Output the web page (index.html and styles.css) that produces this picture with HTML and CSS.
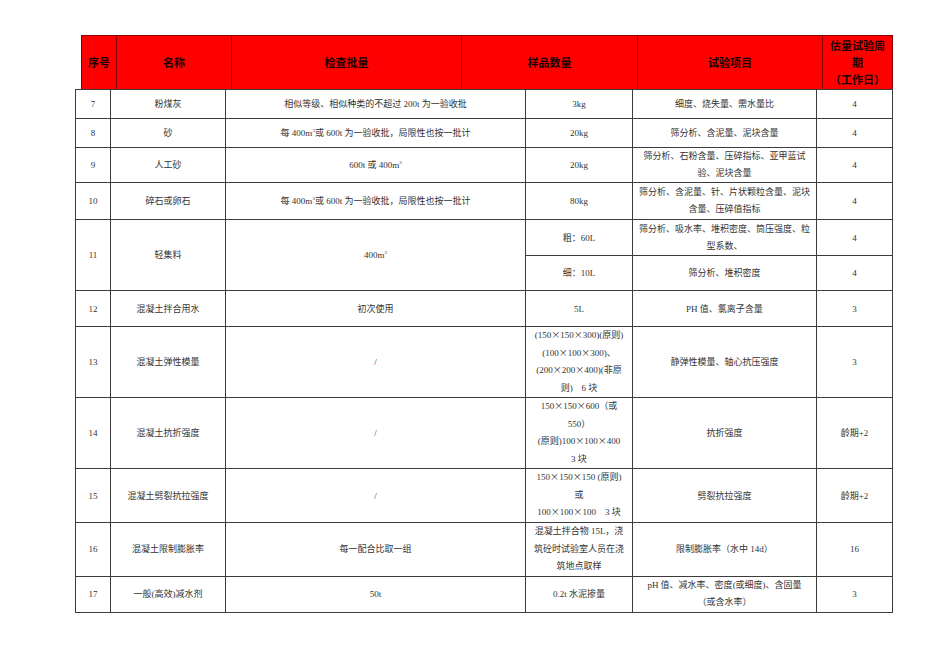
FILE: index.html
```html
<!DOCTYPE html>
<html lang="zh-CN">
<head>
<meta charset="utf-8">
<title>试验项目表</title>
<link rel="stylesheet" href="styles.css">
</head>
<body>
<div class="page">
  <table class="head">
    <colgroup>
      <col class="h1"><col class="h2"><col class="h3"><col class="h4"><col class="h5"><col class="h6">
    </colgroup>
    <tr>
      <th>序号</th>
      <th>名称</th>
      <th>检查批量</th>
      <th>样品数量</th>
      <th>试验项目</th>
      <th class="multi">估量试验周<br>期<br>（工作日）</th>
    </tr>
  </table>
  <table class="grid">
    <colgroup>
      <col class="c1"><col class="c2"><col class="c3"><col class="c4"><col class="c5"><col class="c6">
    </colgroup>
    <tr class="r29">
      <td>7</td><td>粉煤灰</td><td>相似等级、相似种类的不超过 200t 为一验收批</td><td>3kg</td><td>细度、烧失量、需水量比</td><td>4</td>
    </tr>
    <tr class="r29">
      <td>8</td><td>砂</td><td>每 400m<sup>3</sup>或 600t 为一验收批，局限性也按一批计</td><td>20kg</td><td>筛分析、含泥量、泥块含量</td><td>4</td>
    </tr>
    <tr class="r35">
      <td>9</td><td>人工砂</td><td>600t 或 400m<sup>3</sup></td><td>20kg</td><td class="ml">筛分析、石粉含量、压碎指标、亚甲蓝试<br>验、泥块含量</td><td>4</td>
    </tr>
    <tr class="r37">
      <td>10</td><td>碎石或卵石</td><td>每 400m<sup>3</sup>或 600t 为一验收批，局限性也按一批计</td><td>80kg</td><td class="ml">筛分析、含泥量、针、片状颗粒含量、泥块<br>含量、压碎值指标</td><td>4</td>
    </tr>
    <tr class="r36">
      <td rowspan="2">11</td><td rowspan="2">轻集料</td><td rowspan="2">400m<sup>3</sup></td><td>粗：60L</td><td class="ml">筛分析、吸水率、堆积密度、筒压强度、粒<br>型系数、</td><td>4</td>
    </tr>
    <tr class="r35">
      <td>细：10L</td><td>筛分析、堆积密度</td><td>4</td>
    </tr>
    <tr class="r36">
      <td>12</td><td>混凝土拌合用水</td><td>初次使用</td><td>5L</td><td>PH 值、氯离子含量</td><td>3</td>
    </tr>
    <tr class="r71">
      <td>13</td><td>混凝土弹性模量</td><td>/</td><td class="ml tall">(150<span class="x">×</span>150<span class="x">×</span>300)(原则)<br>(100<span class="x">×</span>100<span class="x">×</span>300)、<br>(200<span class="x">×</span>200<span class="x">×</span>400)(非原<br>则)　6 块</td><td>静弹性模量、轴心抗压强度</td><td>3</td>
    </tr>
    <tr class="r71">
      <td>14</td><td>混凝土抗折强度</td><td>/</td><td class="ml tall">150<span class="x">×</span>150<span class="x">×</span>600（或<br>550）<br>(原则)100<span class="x">×</span>100<span class="x">×</span>400<br>3 块</td><td>抗折强度</td><td>龄期+2</td>
    </tr>
    <tr class="r54">
      <td>15</td><td>混凝土劈裂抗拉强度</td><td>/</td><td class="ml tall">150<span class="x">×</span>150<span class="x">×</span>150 (原则)<br>或<br>100<span class="x">×</span>100<span class="x">×</span>100　3 块</td><td>劈裂抗拉强度</td><td>龄期+2</td>
    </tr>
    <tr class="r53">
      <td>16</td><td>混凝土限制膨胀率</td><td>每一配合比取一组</td><td class="ml tall">混凝土拌合物 15L，浇<br>筑砼时试验室人员在浇<br>筑地点取样</td><td>限制膨胀率（水中 14d）</td><td>16</td>
    </tr>
    <tr class="r36">
      <td>17</td><td>一般(高效)减水剂</td><td>50t</td><td>0.2t 水泥掺量</td><td class="ml">pH 值、减水率、密度(或细度)、含固量<br>（或含水率）</td><td>3</td>
    </tr>
  </table>
</div>
</body>
</html>
```

FILE: styles.css
```css
html, body {
  margin: 0;
  padding: 0;
  background: #ffffff;
}

.page {
  padding-top: 35px;
  font-family: "Liberation Serif", "Noto Sans CJK SC", serif;
}

table {
  border-collapse: separate;
  border-spacing: 0;
  table-layout: fixed;
}

/* header band */
.head {
  margin-left: 81px;
  width: 812px;
  background: #ff0000;
  border-top: 1px solid #8a0000;
  border-left: 1px solid #8a0000;
}

.head col.h1 { width: 35px; }
.head col.h2 { width: 115px; }
.head col.h3 { width: 230px; }
.head col.h4 { width: 176px; }
.head col.h5 { width: 185px; }
.head col.h6 { width: 70px; }

.head th {
  height: 53px;
  padding: 0;
  border-right: 1px solid #8a0000;
  font-family: "Noto Sans CJK SC", sans-serif;
  font-size: 11px;
  font-weight: 700;
  color: #1a0000;
  text-align: center;
  vertical-align: middle;
  line-height: 17px;
  white-space: nowrap;
}

/* body grid */
.grid {
  margin-left: 75px;
  width: 818px;
  border-top: 1px solid #3c3c3c;
  border-left: 1px solid #3c3c3c;
}

.grid col.c1 { width: 35px; }
.grid col.c2 { width: 115px; }
.grid col.c3 { width: 300px; }
.grid col.c4 { width: 107px; }
.grid col.c5 { width: 184px; }
.grid col.c6 { width: 76px; }

.grid td {
  padding: 0;
  border-right: 1px solid #3c3c3c;
  border-bottom: 1px solid #3c3c3c;
  font-size: 9px;
  color: #333333;
  text-align: center;
  vertical-align: middle;
  white-space: nowrap;
  line-height: 12px;
}

.grid td.ml {
  line-height: 17px;
}

.grid td.tall {
  line-height: 17.5px;
}

.grid .x {
  font-family: "Noto Sans CJK SC", sans-serif;
  line-height: 0;
}

.grid sup {
  font-size: 5px;
  line-height: 0;
  vertical-align: 4px;
}

.r29 { height: 29px; }
.r35 { height: 35px; }
.r36 { height: 36px; }
.r37 { height: 37px; }
.r53 { height: 53px; }
.r54 { height: 54px; }
.r71 { height: 71px; }
```
